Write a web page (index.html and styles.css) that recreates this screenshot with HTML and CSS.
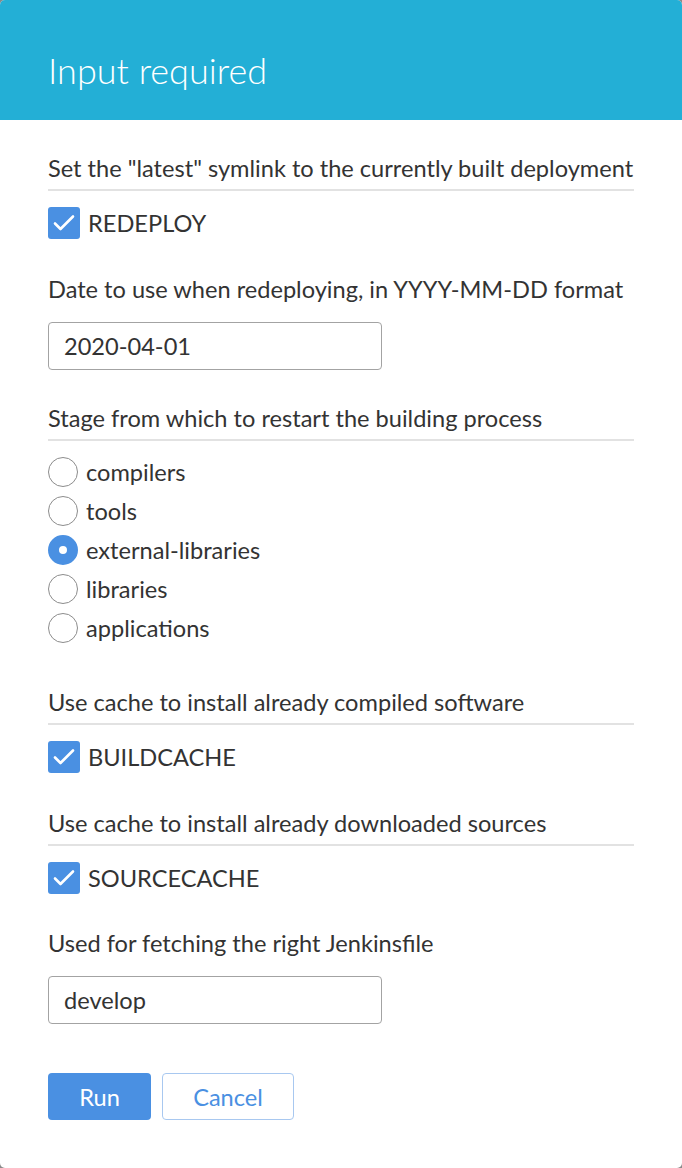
FILE: index.html
```html
<!DOCTYPE html>
<html lang="en">
<head>
<meta charset="utf-8">
<title>Input required</title>
<link rel="stylesheet" href="styles.css">
</head>
<body>
<div class="dialog">
  <header class="dialog-header">
    <h1 class="dialog-title">Input required</h1>
  </header>
  <form class="dialog-body">
    <div class="param">
      <div class="desc">Set the "latest" symlink to the currently built deployment</div>
      <div class="rule"></div>
      <label class="check">
        <span class="box"><svg viewBox="0 0 32 32" width="32" height="32"><path d="M7 16.5 L12.5 22 L25 9.5" fill="none" stroke="#fff" stroke-width="2.6" stroke-linecap="round" stroke-linejoin="round"/></svg></span>
        <span class="check-label">REDEPLOY</span>
      </label>
    </div>
    <div class="param param-field">
      <div class="desc">Date to use when redeploying, in YYYY-MM-DD format</div>
      <div class="field">2020-04-01</div>
    </div>
    <div class="param param-radios">
      <div class="desc">Stage from which to restart the building process</div>
      <div class="rule"></div>
      <div class="radios">
        <div class="radio"><span class="dot"></span><span>compilers</span></div>
        <div class="radio"><span class="dot"></span><span>tools</span></div>
        <div class="radio"><span class="dot on"></span><span>external-libraries</span></div>
        <div class="radio"><span class="dot"></span><span>libraries</span></div>
        <div class="radio"><span class="dot"></span><span>applications</span></div>
      </div>
    </div>
    <div class="param">
      <div class="desc">Use cache to install already compiled software</div>
      <div class="rule"></div>
      <label class="check">
        <span class="box"><svg viewBox="0 0 32 32" width="32" height="32"><path d="M7 16.5 L12.5 22 L25 9.5" fill="none" stroke="#fff" stroke-width="2.6" stroke-linecap="round" stroke-linejoin="round"/></svg></span>
        <span class="check-label">BUILDCACHE</span>
      </label>
    </div>
    <div class="param param-last-check">
      <div class="desc">Use cache to install already downloaded sources</div>
      <div class="rule"></div>
      <label class="check">
        <span class="box"><svg viewBox="0 0 32 32" width="32" height="32"><path d="M7 16.5 L12.5 22 L25 9.5" fill="none" stroke="#fff" stroke-width="2.6" stroke-linecap="round" stroke-linejoin="round"/></svg></span>
        <span class="check-label">SOURCECACHE</span>
      </label>
    </div>
    <div class="param param-field">
      <div class="desc">Used for fetching the right Jenkinsfile</div>
      <div class="field">develop</div>
    </div>
    <div class="actions">
      <span class="btn btn-primary">Run</span>
      <span class="btn btn-secondary">Cancel</span>
    </div>
  </form>
</div>
</body>
</html>
```

FILE: styles.css
```css
html {
  background: #8a8a8a;
}
body {
  margin: 0;
  font-family: Lato, "Open Sans", sans-serif;
  color: #333;
}
.dialog {
  background: #fff;
  border-radius: 5px;
  overflow: hidden;
  height: 1168px;
}
.dialog-header {
  background: #23afd6;
  height: 120px;
  box-sizing: border-box;
  display: flex;
  align-items: center;
  padding: 20px 48px 0;
}
.dialog-title {
  margin: 0;
  font-weight: 300;
  font-size: 36px;
  color: #fff;
  line-height: 40px;
}
.dialog-body {
  padding: 36px 48px 0;
}
.param {
  margin-bottom: 38px;
}
.param-field {
  margin-bottom: 36px;
}
.param-radios {
  margin-bottom: 47px;
}
.param-last-check {
  margin-bottom: 37px;
}
.desc {
  font-size: 23.6px;
  line-height: 24px;
  white-space: nowrap;
}
.rule {
  height: 2px;
  background: #e2e2e2;
  margin: 9px 0 16px;
}
.check {
  display: flex;
  align-items: center;
  gap: 8px;
  height: 32px;
}
.box {
  width: 32px;
  height: 32px;
  border-radius: 3px;
  background: #4a90e2;
  display: block;
}
.box svg {
  display: block;
}
.check-label {
  font-size: 23.6px;
}
.field {
  margin-top: 21px;
  width: 334px;
  height: 48px;
  box-sizing: border-box;
  border: 1px solid #a3a3a3;
  border-radius: 4px;
  padding: 0 15px;
  font-size: 23.6px;
  line-height: 46px;
}
.radios {
  display: flex;
  flex-direction: column;
  gap: 9px;
}
.radio {
  display: flex;
  align-items: center;
  gap: 8px;
  height: 30px;
  font-size: 23.6px;
}
.dot {
  width: 30px;
  height: 30px;
  box-sizing: border-box;
  border: 1.5px solid #8c8c8c;
  border-radius: 50%;
}
.dot.on {
  border: 11px solid #4a90e2;
  background: #fff;
}
.actions {
  display: flex;
  gap: 11px;
  padding-top: 13px;
}
.btn {
  height: 47px;
  box-sizing: border-box;
  display: flex;
  align-items: center;
  justify-content: center;
  border-radius: 4px;
  font-size: 23.6px;
}
.btn-primary {
  width: 103px;
  background: #4a90e2;
  color: #fff;
}
.btn-secondary {
  width: 132px;
  border: 1px solid #a8c8f0;
  color: #4a90e2;
  background: #fff;
}
```
